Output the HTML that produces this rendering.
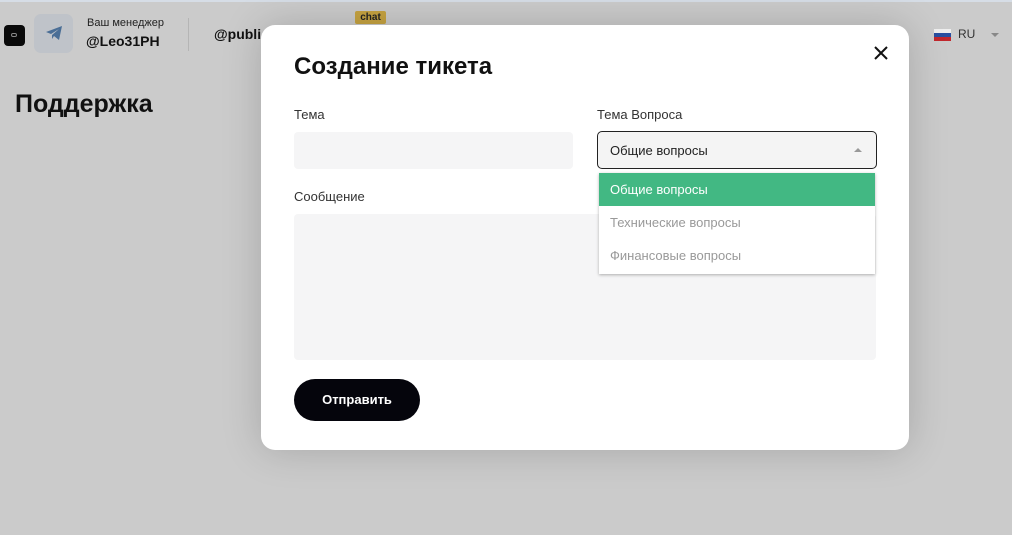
<!DOCTYPE html>
<html><head><meta charset="utf-8"><style>
*{box-sizing:border-box;margin:0;padding:0}
body{width:1012px;height:535px;overflow:hidden;background:#cbcbcb;font-family:"Liberation Sans",sans-serif;position:relative}
.top{position:absolute;left:0;top:0;width:1012px;height:2px;background:#d6dde6}
.abs{position:absolute}
.modal{position:absolute;left:261px;top:25px;width:648px;height:425px;background:#fff;border-radius:14px;box-shadow:0 0 40px rgba(0,0,0,.18)}
.lbl{position:absolute;font-size:13px;color:#333}
.inp{position:absolute;background:#f5f5f6;border-radius:4px}
.opt{height:33px;line-height:33px;padding-left:11px;font-size:13px;color:#999}
</style></head><body>
<div class="top"></div>
<div class="abs" style="left:4px;top:25px;width:21px;height:21px;background:#0a0a0a;border-radius:4px"></div>
<div class="abs" style="left:11px;top:33px;width:6px;height:4px;border:1px solid #888;border-radius:2px"></div>
<div class="abs" style="left:34px;top:14px;width:39px;height:39px;background:#bfc3c9;border-radius:7px"></div>
<svg class="abs" style="left:45px;top:25px" width="18" height="16" viewBox="0 0 18 16"><path d="M1 7 L17 1 L14 15 L9 11 L7 14 L7 10 L14 4 L6 9 Z" fill="#4a6e96"/></svg>
<div class="abs" style="left:87px;top:17px;font-size:11px;color:#222">Ваш менеджер</div>
<div class="abs" style="left:86px;top:33px;font-size:14px;font-weight:bold;color:#111">@Leo31PH</div>
<div class="abs" style="left:188px;top:18px;width:1px;height:33px;background:#b5b5b5"></div>
<div class="abs" style="left:214px;top:26px;font-size:14px;font-weight:bold;color:#111">@publi</div>
<div class="abs" style="left:355px;top:11px;width:31px;height:13px;background:#c6a341;border-radius:2px;font-size:10px;font-weight:bold;text-align:center;line-height:13px;color:#222">chat</div>
<div class="abs" style="left:15px;top:90px;font-size:25px;font-weight:bold;color:#111">Поддержка</div>
<div class="abs" style="left:934px;top:29px;width:17px;height:4px;background:#eee"></div>
<div class="abs" style="left:934px;top:33px;width:17px;height:4px;background:#2a4fa0"></div>
<div class="abs" style="left:934px;top:37px;width:17px;height:4px;background:#c1272d"></div>
<div class="abs" style="left:958px;top:27px;font-size:12px;color:#333">RU</div>
<div class="abs" style="left:991px;top:33px;width:0;height:0;border-left:4px solid transparent;border-right:4px solid transparent;border-top:4px solid #888"></div>
<div class="modal">
<div class="abs" style="left:33px;top:28px;font-size:24px;font-weight:bold;color:#111">Создание тикета</div>
<svg class="abs" style="left:612px;top:20px" width="16" height="16"><path d="M2 2L14 14M14 2L2 14" stroke="#111" stroke-width="2"/></svg>
<div class="lbl" style="left:33px;top:82px">Тема</div>
<div class="inp" style="left:33px;top:107px;width:279px;height:37px"></div>
<div class="lbl" style="left:336px;top:82px">Тема Вопроса</div>
<div class="abs" style="left:336px;top:106px;width:280px;height:38px;background:#f4f4f4;border:1px solid #222;border-radius:5px;font-size:13px;color:#222;line-height:38px;padding-left:12px">Общие вопросы</div>
<div class="abs" style="left:593px;top:123px;width:0;height:0;border-left:4px solid transparent;border-right:4px solid transparent;border-bottom:4px solid #999"></div>
<div class="lbl" style="left:33px;top:164px">Сообщение</div>
<div class="inp" style="left:33px;top:189px;width:582px;height:146px"></div>
<div class="abs" style="left:338px;top:148px;width:276px;height:101px;background:#fff;box-shadow:0 1px 3px rgba(0,0,0,.3)">
<div class="opt" style="background:#42b883;color:#fff">Общие вопросы</div>
<div class="opt">Технические вопросы</div>
<div class="opt">Финансовые вопросы</div>
</div>
<div class="abs" style="left:33px;top:354px;width:126px;height:42px;background:#05050c;border-radius:21px;color:#fff;font-size:13px;font-weight:bold;text-align:center;line-height:42px">Отправить</div>
</div>
</body></html>
